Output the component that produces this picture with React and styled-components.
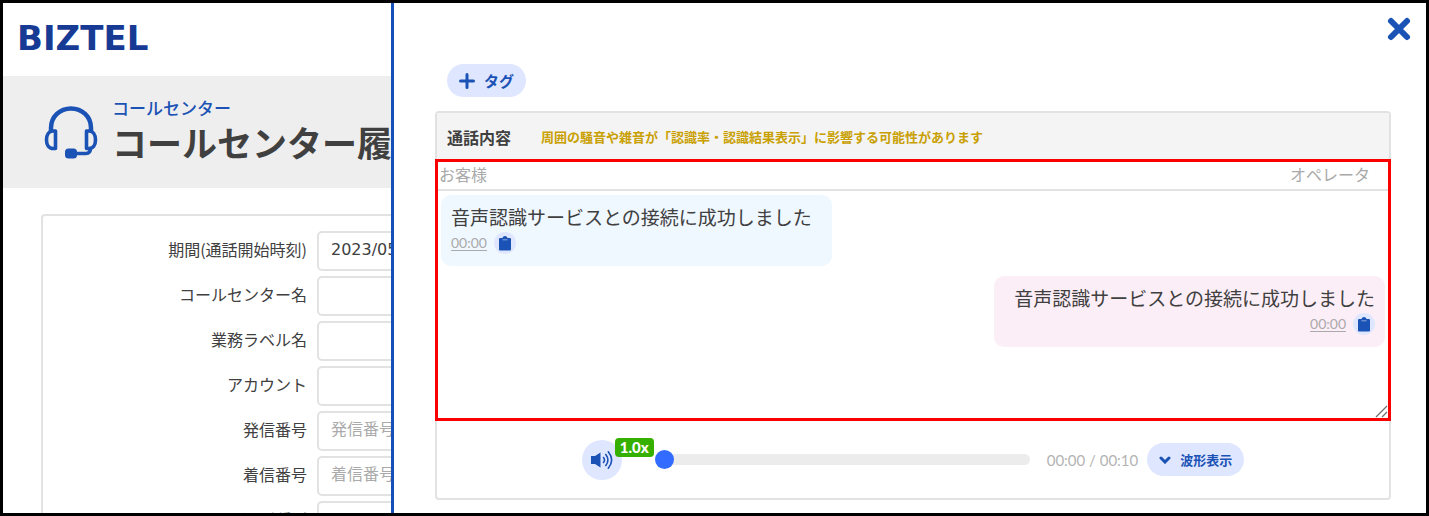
import styled, { createGlobalStyle, css } from 'styled-components';

const GlobalStyle = createGlobalStyle`
  :root {
    --color-brand: #1b52b5;
    --color-brand-100: #dfe6ff;
    --color-grey-50: #f4f4f4;
    --color-grey-100: #eeeeee;
    --color-grey-200: #e2e2e2;
    --color-grey-400: #aaaaaa;
    --color-grey-700: #404040;
    --font-ja: 'Noto Sans CJK JP', sans-serif;
    --font-num: Lato, 'Noto Sans CJK JP', sans-serif;
  }
  * {
    box-sizing: border-box;
  }
  body {
    margin: 0;
    background: #fff;
    color: var(--color-grey-700);
    font-family: var(--font-ja);
  }
  button,
  input {
    font-family: inherit;
  }
`;

const Frame = styled.div`
  display: flex;
  height: 100vh;
  border: 3px solid #000;
  overflow: hidden;
`;

const Page = styled.main`
  flex: 0 0 388px;
  overflow: hidden;
`;

const TopBar = styled.header`
  display: flex;
  align-items: center;
  height: 73px;
  padding: 0 0 4px 14px;
`;

const Logo = styled.a`
  color: #173a94;
  font-family: 'DejaVu Sans', sans-serif;
  font-size: 34px;
  font-weight: 700;
  line-height: 34px;
  text-decoration: none;
`;

const TitleBand = styled.div`
  display: flex;
  align-items: center;
  gap: 13px;
  height: 112px;
  padding-left: 40px;
  background: var(--color-grey-100);
  white-space: nowrap;

  & svg {
    flex: none;
  }
`;

const Category = styled.p`
  margin: 0;
  color: var(--color-brand);
  font-size: 17px;
  font-weight: 500;
  line-height: 20px;
`;

const PageTitle = styled.h1`
  margin: 0;
  font-size: 35px;
  font-weight: 700;
  line-height: 48px;
`;

const SearchForm = styled.form`
  display: flex;
  flex-direction: column;
  gap: 5px;
  width: 800px;
  margin: 26px 0 0 38px;
  padding: 15px 0;
  border: 2px solid var(--color-grey-200);
  border-radius: 4px;
`;

const FormRow = styled.div`
  display: flex;
  align-items: center;
  gap: 10px;
`;

const Label = styled.label`
  width: 264px;
  padding-bottom: 4px;
  font-size: 16px;
  line-height: 24px;
  text-align: right;
`;

const TextInput = styled.input`
  width: 240px;
  height: 40px;
  padding: 0 12px 4px;
  border: 2px solid var(--color-grey-200);
  border-radius: 5px;
  color: var(--color-grey-700);
  font-family: 'DejaVu Sans', 'Noto Sans CJK JP', sans-serif;
  font-size: 16px;

  &::placeholder {
    color: var(--color-grey-400);
    font-family: var(--font-ja);
  }
`;

const Drawer = styled.aside`
  display: flex;
  flex: 1;
  flex-direction: column;
  align-items: flex-start;
  min-width: 0;
  padding: 11px 35px 0 41px;
  border-left: 3px solid #1450b8;
  background: #fff;
`;

const CloseButton = styled.button`
  display: flex;
  align-self: flex-end;
  margin-right: -23px;
  padding: 0;
  border: 0;
  background: none;
  color: var(--color-brand);
`;

const Pill = styled.button`
  display: flex;
  align-items: center;
  justify-content: center;
  gap: 9px;
  height: 33px;
  padding: 0 12px;
  border: 0;
  border-radius: 17px;
  background: var(--color-brand-100);
  color: var(--color-brand);
  font-size: ${(props) => props.$size};
  font-weight: 700;
  line-height: 24px;
`;

const TagBar = styled.div`
  padding: 20px 12px 14px;
`;

const Card = styled.section`
  width: 100%;
  border: 2px solid var(--color-grey-200);
  border-radius: 4px;
`;

const CardHeader = styled.div`
  display: flex;
  align-items: center;
  gap: 30px;
  height: 46px;
  padding: 2px 10px 0;
  background: var(--color-grey-50);
`;

const CardTitle = styled.h2`
  margin: 0;
  font-size: 16px;
  font-weight: 700;
  line-height: 24px;
`;

const Warning = styled.p`
  margin: 0;
  color: #c9a002;
  font-size: 13px;
  font-weight: 700;
  line-height: 24px;
`;

const Transcript = styled.div`
  position: relative;
  height: 262px;
  margin: 0 -2px;
  border: 3px solid #fa0000;
`;

const Speakers = styled.div`
  display: flex;
  justify-content: space-between;
  padding: 0 18px 3px 1px;
  border-bottom: 2px solid var(--color-grey-200);
  color: var(--color-grey-400);
  font-size: 16px;
  line-height: 24px;
`;

const Messages = styled.div`
  display: flex;
  flex-direction: column;
  gap: 10px;
  padding: 4px 3px;
`;

const Bubble = styled.div`
  display: flex;
  flex-direction: column;
  align-self: flex-start;
  gap: 3px;
  min-width: 391px;
  padding: 10px 10px 12px;
  border-radius: 10px;
  background: #eff7ff;

  ${(props) =>
    props.$operator &&
    css`
      align-items: flex-end;
      align-self: flex-end;
      background: #fceef7;
    `}
`;

const Message = styled.p`
  margin: 0;
  font-size: 19px;
  line-height: 24px;
`;

const Meta = styled.div`
  display: flex;
  align-items: center;
  gap: 7px;
`;

const TimeLink = styled.a`
  border-bottom: 1px solid var(--color-grey-400);
  color: var(--color-grey-400);
  font-family: var(--font-num);
  font-size: 14px;
  line-height: 14px;
  text-decoration: none;
`;

const CopyButton = styled.button`
  display: flex;
  align-items: center;
  justify-content: center;
  width: 22px;
  height: 22px;
  padding: 0;
  border: 0;
  border-radius: 50%;
  background: var(--color-brand-100);
  color: var(--color-brand);
`;

const Grip = styled.svg`
  position: absolute;
  right: 0;
  bottom: 0;
`;

const Player = styled.div`
  display: flex;
  align-items: center;
  justify-content: center;
  height: 77px;
`;

const VolumeButton = styled.button`
  position: relative;
  display: flex;
  align-items: center;
  justify-content: center;
  width: 40px;
  height: 40px;
  margin-right: 33px;
  padding: 0;
  border: 0;
  border-radius: 50%;
  background: var(--color-brand-100);
  color: var(--color-brand);
`;

const Speed = styled.span`
  position: absolute;
  top: -2px;
  left: 33px;
  width: 39px;
  border-radius: 4px;
  background: #35b000;
  color: #fff;
  font-family: var(--font-num);
  font-size: 15px;
  font-weight: 900;
  line-height: 19px;
  text-align: center;
`;

const Seek = styled.input`
  width: 375px;
  height: 20px;
  margin: 0 17px 0 0;
  appearance: none;
  background: none;

  &::-webkit-slider-runnable-track {
    height: 11px;
    border-radius: 6px;
    background: #ececec;
  }
  &::-webkit-slider-thumb {
    width: 19px;
    height: 19px;
    margin-top: -4px;
    border-radius: 50%;
    appearance: none;
    background: #316bff;
  }
`;

const Clock = styled.span`
  margin-right: 9px;
  color: #b4b4b4;
  font-family: var(--font-num);
  font-size: 15px;
  line-height: 20px;
`;

function HeadsetIcon() {
  return (
    <svg width="56" height="56" viewBox="0 0 56 56" fill="none" stroke="#1b52b5" strokeWidth="4.500" aria-hidden="true">
      <path d="M8 28V24C8 12.500 17 4.500 28 4.500S48 12.500 48 24V28" />
      <path d="M12.500 27V44.500H10C6 44.500 3.500 41 3.500 36S6 27 10 27ZM43.500 27V44.500H46C50 44.500 52.500 41 52.500 36S50 27 46 27Z" strokeLinejoin="round" strokeWidth="3.600" />
      <path d="M47.500 44C47.500 47.500 46 49.500 43 49.500H30" strokeWidth="3.600" />
      <rect x="22" y="44.500" width="12" height="10" rx="3.500" fill="#1b52b5" stroke="none" />
    </svg>
  );
}

function CloseIcon() {
  return (
    <svg width="30" height="30" viewBox="0 0 30 30" stroke="currentColor" strokeWidth="6" strokeLinecap="round" aria-hidden="true">
      <path d="M7 7L23 23M23 7L7 23" />
    </svg>
  );
}

function PlusIcon() {
  return (
    <svg width="16" height="16" viewBox="0 0 16 16" stroke="currentColor" strokeWidth="3" strokeLinecap="round" aria-hidden="true">
      <path d="M8 1.500V14.500M1.500 8H14.500" />
    </svg>
  );
}

function ClipboardIcon() {
  return (
    <svg width="12" height="15" viewBox="0 0 12 15" fill="currentColor" aria-hidden="true">
      <path d="M1 2H3.500C3.800 .8 4.800 0 6 0S8.200 .8 8.500 2H11Q12 2 12 3V13.500Q12 14.500 11 14.500H1Q0 14.500 0 13.500V3Q0 2 1 2Z" />
      <path d="M3.500 3.800H8.500" stroke="#8ba6de" strokeWidth="1" />
    </svg>
  );
}

function VolumeIcon() {
  return (
    <svg width="24" height="20" viewBox="0 0 24 20" fill="none" stroke="currentColor" strokeWidth="1.600" strokeLinecap="round" aria-hidden="true">
      <path d="M1 6H5L10.500 2.500V17.500L5 14H1Z" fill="currentColor" stroke="none" />
      <path d="M13.500 7.500Q15.500 10 13.500 12.500M15.800 4.500Q20 10 15.800 15.500M18.300 1.800Q25 10 18.300 18.200" />
    </svg>
  );
}

function ChevronIcon() {
  return (
    <svg width="12" height="8" viewBox="0 0 12 8" fill="none" stroke="currentColor" strokeWidth="3" strokeLinecap="round" aria-hidden="true">
      <path d="M2 2L6 6L10 2" />
    </svg>
  );
}

const fields = [
  { id: 'period', label: '期間(通話開始時刻)', value: '2023/05/01' },
  { id: 'center', label: 'コールセンター名' },
  { id: 'business', label: '業務ラベル名' },
  { id: 'account', label: 'アカウント' },
  { id: 'caller', label: '発信番号', placeholder: '発信番号' },
  { id: 'callee', label: '着信番号', placeholder: '着信番号' },
  { id: 'customer', label: '通話種別' },
];

const messages = [
  { id: 1, text: '音声認識サービスとの接続に成功しました', time: '00:00', operator: false },
  { id: 2, text: '音声認識サービスとの接続に成功しました', time: '00:00', operator: true },
];

function SearchPage() {
  return (
    <Page>
      <TopBar>
        <Logo href="#">BIZTEL</Logo>
      </TopBar>
      <TitleBand>
        <HeadsetIcon />
        <div>
          <Category>コールセンター</Category>
          <PageTitle>コールセンター履歴</PageTitle>
        </div>
      </TitleBand>
      <SearchForm>
        {fields.map((field) => (
          <FormRow key={field.id}>
            <Label htmlFor={field.id}>{field.label}</Label>
            <TextInput
              id={field.id}
              type="text"
              defaultValue={field.value}
              placeholder={field.placeholder}
            />
          </FormRow>
        ))}
      </SearchForm>
    </Page>
  );
}

function CallDrawer() {
  return (
    <Drawer>
      <CloseButton type="button" aria-label="閉じる">
        <CloseIcon />
      </CloseButton>
      <TagBar>
        <Pill type="button" $size="15px">
          <PlusIcon />
          タグ
        </Pill>
      </TagBar>
      <Card>
        <CardHeader>
          <CardTitle>通話内容</CardTitle>
          <Warning>周囲の騒音や雑音が「認識率・認識結果表示」に影響する可能性があります</Warning>
        </CardHeader>
        <Transcript>
          <Speakers>
            <span>お客様</span>
            <span>オペレータ</span>
          </Speakers>
          <Messages>
            {messages.map((message) => (
              <Bubble key={message.id} $operator={message.operator}>
                <Message>{message.text}</Message>
                <Meta>
                  <TimeLink href="#">{message.time}</TimeLink>
                  <CopyButton type="button" aria-label="コピー">
                    <ClipboardIcon />
                  </CopyButton>
                </Meta>
              </Bubble>
            ))}
          </Messages>
          <Grip width="13" height="13" viewBox="0 0 13 13" stroke="#707070" strokeWidth="1.300" aria-hidden="true">
            <path d="M1 12L12 1M7 12L12 7" />
          </Grip>
        </Transcript>
        <Player>
          <VolumeButton type="button" aria-label="音量">
            <VolumeIcon />
            <Speed>1.0x</Speed>
          </VolumeButton>
          <Seek type="range" min="0" max="10" defaultValue="0" aria-label="再生位置" />
          <Clock>00:00 / 00:10</Clock>
          <Pill type="button" $size="13px">
            <ChevronIcon />
            波形表示
          </Pill>
        </Player>
      </Card>
    </Drawer>
  );
}

function App() {
  return (
    <>
      <GlobalStyle />
      <Frame>
        <SearchPage />
        <CallDrawer />
      </Frame>
    </>
  );
}

export default App;
